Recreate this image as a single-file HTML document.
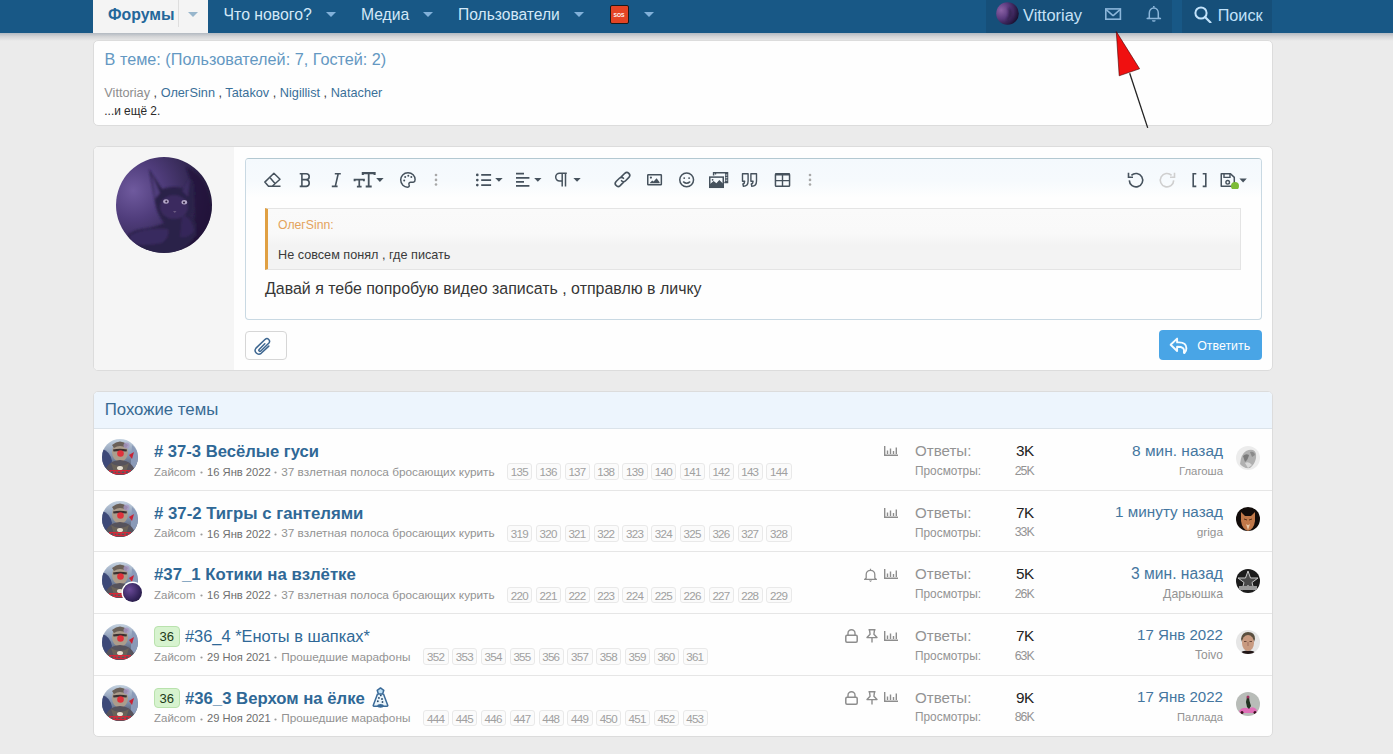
<!DOCTYPE html><html><head><meta charset="utf-8"><style>
html,body{margin:0;padding:0;width:1393px;height:754px;overflow:hidden;background:#ebebeb;font-family:"Liberation Sans",sans-serif;position:relative}
</style></head><body>
<div style="position:absolute;left:0px;top:0px;width:1393px;height:32.5px;background:#185886"></div><div style="position:absolute;left:0px;top:32.5px;width:1393px;height:8.5px;background:linear-gradient(#b2b9c1,#d4d5d7 45%,#ebebeb)"></div><div style="position:absolute;left:93px;top:0px;width:115px;height:32.5px;background:#f4f4f4"></div><div style="position:absolute;left:178px;top:0px;width:1px;height:27px;background:#dedede"></div><svg style="position:absolute;left:188.0px;top:11.8px;" width="10" height="5" viewBox="0 0 10 5"><path d="M0 0H10L5.0 5Z" fill="#98b6cc"/></svg><svg style="position:absolute;left:326.0px;top:12px;" width="10" height="5" viewBox="0 0 10 5"><path d="M0 0H10L5.0 5Z" fill="#82b1da"/></svg><svg style="position:absolute;left:423.2px;top:12px;" width="10" height="5" viewBox="0 0 10 5"><path d="M0 0H10L5.0 5Z" fill="#82b1da"/></svg><svg style="position:absolute;left:574.2px;top:12px;" width="10" height="5" viewBox="0 0 10 5"><path d="M0 0H10L5.0 5Z" fill="#82b1da"/></svg><div style="position:absolute;left:610px;top:5px;width:18.5px;height:18.5px;background:#e44424;border:1.5px solid #1a1a1a;box-sizing:border-box;border-radius:2px"></div><svg style="position:absolute;left:644.0px;top:12px;" width="10" height="5" viewBox="0 0 10 5"><path d="M0 0H10L5.0 5Z" fill="#82b1da"/></svg><div style="position:absolute;left:986px;top:0px;width:186px;height:32.5px;background:#164f79"></div><div style="position:absolute;left:1182px;top:0px;width:90px;height:32.5px;background:#164f79"></div><svg style="position:absolute;left:995.5px;top:2.2px;" width="23" height="23" viewBox="0 0 23 23"><defs><radialGradient id="vg" cx="22%" cy="35%" r="85%"><stop offset="0" stop-color="#8c62a6"/><stop offset="0.45" stop-color="#5a3a7e"/><stop offset="0.8" stop-color="#2c1c48"/><stop offset="1" stop-color="#120c26"/></radialGradient><filter id="vb"><feGaussianBlur stdDeviation="0.8"/></filter></defs><circle cx="11.5" cy="11.5" r="11.3" fill="url(#vg)"/><path d="M12 5 Q17 7 16 13 Q14 18 10 19 Q14 13 12 5Z" fill="#2a1a44" opacity="0.7" filter="url(#vb)"/></svg><svg style="position:absolute;left:1104px;top:7px;" width="18" height="14" viewBox="0 0 18 14"><rect x="1.8" y="1.9" width="14.6" height="10.3" fill="none" stroke="#8bb6da" stroke-width="1.6"/><path d="M2.2 2.6L8.4 8.1Q9.1 8.7 9.8 8.1L16 2.6" fill="none" stroke="#8bb6da" stroke-width="1.5"/></svg><svg style="position:absolute;left:1146px;top:5px;" width="16" height="18" viewBox="0 0 16 18"><path d="M7.8 0.9V2.6" stroke="#8bb6da" stroke-width="1.6"/><path d="M3.3 13.1V8.3C3.3 5.2 5.2 3 7.8 3C10.4 3 12.3 5.2 12.3 8.3V13.1L14.4 13.6H1.2Z" fill="none" stroke="#8bb6da" stroke-width="1.5" stroke-linejoin="round"/><path d="M5.9 15.2H9.7A1.9 1.5 0 0 1 5.9 15.2Z" fill="#8bb6da"/></svg><svg style="position:absolute;left:1193.5px;top:5.5px;" width="18" height="17" viewBox="0 0 18 17"><circle cx="7" cy="7" r="5.6" fill="none" stroke="#c2e2fa" stroke-width="2"/><path d="M11 11l5.5 5.5" stroke="#c2e2fa" stroke-width="2.2" stroke-linecap="round"/></svg><div style="position:absolute;left:93px;top:40px;width:1179.5px;height:85.5px;background:#fefefe;border:1px solid #dcdcdc;border-radius:5px;box-sizing:border-box"></div><div style="position:absolute;left:93px;top:146px;width:1179.5px;height:224.5px;background:#fefefe;border:1px solid #dcdcdc;border-radius:5px;box-sizing:border-box"></div><div style="position:absolute;left:94px;top:147px;width:139.5px;height:222.5px;background:#f5f5f5;border-radius:4px 0 0 4px"></div><svg style="position:absolute;left:116px;top:157px;" width="96" height="96" viewBox="0 0 96 96"><defs><radialGradient id="av" cx="18%" cy="35%" r="100%"><stop offset="0" stop-color="#6f5a9e"/><stop offset="0.3" stop-color="#503d7c"/><stop offset="0.65" stop-color="#31264f"/><stop offset="1" stop-color="#171028"/></radialGradient>
<clipPath id="avc"><circle cx="48" cy="48" r="48"/></clipPath><filter id="avb"><feGaussianBlur stdDeviation="1.3"/></filter><filter id="avb2"><feGaussianBlur stdDeviation="0.5"/></filter></defs>
<circle cx="48" cy="48" r="48" fill="url(#av)"/>
<g clip-path="url(#avc)"><g filter="url(#avb)">
<path d="M70 10 Q96 20 96 60 L96 96 L70 96 Q84 60 76 28Z" fill="#20163a" opacity="0.75"/>
<path d="M33 12 Q40 22 46 32 Q58 28 70 32 Q72 26 76 22 Q80 32 78 42 Q80 54 74 60 Q82 64 80 78 Q72 90 60 96 L30 96 Q10 92 8 84 Q12 74 26 72 Q40 70 48 66 Q42 58 40 50 Q36 30 33 12Z" fill="#2c2048"/>
<path d="M35 16 Q40 26 44 36 L39 42Z" fill="#5a4688" opacity="0.8"/><path d="M66 34 L74 22 L72 40Z" fill="#3e2f64"/>
<path d="M14 78 Q30 70 52 72 Q54 80 46 86 Q26 90 14 86Z" fill="#3a2a60" opacity="0.9"/>
<path d="M66 58 Q76 60 78 74 Q72 82 64 80Z" fill="#36285a"/>
<ellipse cx="58" cy="50" rx="14" ry="12" fill="#3a2c5e"/>
</g>
<g filter="url(#avb2)">
<ellipse cx="50" cy="44.5" rx="2.8" ry="2.2" fill="#b4a8c8"/><ellipse cx="68.3" cy="45.3" rx="2.8" ry="2.2" fill="#b4a8c8"/>
<circle cx="50.3" cy="44.6" r="1" fill="#2a1a3a"/><circle cx="68" cy="45.4" r="1" fill="#2a1a3a"/>
<path d="M57 54 L60.5 54 L58.8 56Z" fill="#6a5a80"/>
</g></g></svg><div style="position:absolute;left:244.5px;top:157.5px;width:1017.3px;height:162.0px;background:#fefefe;border:1px solid #c9d9e3;border-top-color:#b3c8d1;border-radius:4px;box-sizing:border-box"></div><div style="position:absolute;left:245.5px;top:158.5px;width:1015.3px;height:39.5px;background:linear-gradient(#f4f9fd,#f6fafd 55%,#fefefe);border-radius:3px 3px 0 0"></div><svg style="position:absolute;left:263px;top:171px;" width="20" height="18" viewBox="0 0 20 18"><path d="M1.8 11.1L10.9 2.3L17 8.3L9.2 15.3H5.5z M7.3 6.9L12.2 12.7 M5.4 15.3H17.5" fill="none" stroke="#46525d" stroke-width="1.5" stroke-linejoin="round"/></svg><svg style="position:absolute;left:298px;top:171px;" width="15" height="18" viewBox="0 0 15 18"><path d="M1.7 2.75H8.2A3 2.95 0 0 1 8.2 8.65H3.9M8.2 8.65A3.5 3.4 0 0 1 8.4 15.35H1.7M3.9 2.75V15.35" fill="none" stroke="#46525d" stroke-width="1.6"/></svg><svg style="position:absolute;left:330px;top:171px;" width="14" height="18" viewBox="0 0 14 18"><path d="M4.8 2.75H10.8M8.2 2.75L5.3 15.35M1.8 15.35H7.6" fill="none" stroke="#46525d" stroke-width="1.6"/></svg><svg style="position:absolute;left:353px;top:171px;" width="32" height="18" viewBox="0 0 32 18"><path d="M1.6 10.2V8.6H10.9V10.2" fill="none" stroke="#46525d" stroke-width="1.9"/><path d="M6.25 8.8V15.4M3.9 15.6H8.6" fill="none" stroke="#46525d" stroke-width="1.7"/><path d="M9.8 3.9V2.1H21.6V3.9" fill="none" stroke="#46525d" stroke-width="2.1"/><path d="M15.7 2.4V15.3M12.7 15.5H18.7" fill="none" stroke="#46525d" stroke-width="1.8"/><path d="M23.2 6.9H30.6L26.9 10.9Z" fill="#46525d"/></svg><svg style="position:absolute;left:399px;top:171px;" width="18" height="18" viewBox="0 0 18 18"><path d="M9 1.8C4.6 1.8 1.7 5.1 1.7 8.8C1.7 13.5 5.2 16.2 8.5 16.2C10.6 16.2 10.4 14.6 10 13.4C9.6 12.1 10.6 11 12 11.2C13.6 11.5 16.1 11.6 16.1 8.6C16.1 4.8 13.2 1.8 9 1.8Z" fill="none" stroke="#46525d" stroke-width="1.5"/><circle cx="5.2" cy="9.4" r="1" fill="#46525d"/><circle cx="6.2" cy="5.9" r="1" fill="#46525d"/><circle cx="9.3" cy="4.7" r="1" fill="#46525d"/><circle cx="12.3" cy="5.9" r="1" fill="#46525d"/></svg><svg style="position:absolute;left:433.6px;top:172px;" width="4" height="15" viewBox="0 0 4 15"><circle cx="2" cy="3" r="1.3" fill="#a8a8a8"/><circle cx="2" cy="7.9" r="1.3" fill="#a8a8a8"/><circle cx="2" cy="12.5" r="1.3" fill="#a8a8a8"/></svg><svg style="position:absolute;left:808.3px;top:172px;" width="4" height="15" viewBox="0 0 4 15"><circle cx="2" cy="3" r="1.3" fill="#a8a8a8"/><circle cx="2" cy="7.9" r="1.3" fill="#a8a8a8"/><circle cx="2" cy="12.5" r="1.3" fill="#a8a8a8"/></svg><svg style="position:absolute;left:474px;top:171px;" width="30" height="18" viewBox="0 0 30 18"><circle cx="3.3" cy="3.9" r="1.35" fill="#46525d"/><circle cx="3.3" cy="9.1" r="1.35" fill="#46525d"/><circle cx="3.3" cy="14.1" r="1.35" fill="#46525d"/><path d="M7.2 3.9H17.1M7.2 9.1H17.1M7.2 14.1H17.1" stroke="#46525d" stroke-width="1.7"/><path d="M21.2 6.9H28.7L24.95 10.8Z" fill="#46525d"/></svg><svg style="position:absolute;left:514px;top:171px;" width="30" height="18" viewBox="0 0 30 18"><path d="M2 2.6H10M2 6.9H15.4M2 10.8H10M2 14.8H15.4" stroke="#46525d" stroke-width="1.7"/><path d="M20.2 6.9H27.5L23.85 10.8Z" fill="#46525d"/></svg><svg style="position:absolute;left:554px;top:171px;" width="28" height="18" viewBox="0 0 28 18"><path d="M12.8 2.2H5.6A3.9 3.9 0 0 0 5.6 10H7.6M8.2 2.2V15.5M11.5 2.2V15.5" fill="none" stroke="#46525d" stroke-width="1.5"/><path d="M19.4 6.9H26.7L23.05 10.8Z" fill="#46525d"/></svg><svg style="position:absolute;left:613px;top:170px;" width="19" height="19" viewBox="0 0 19 19"><path d="M8.2 6.9L11.8 3.3a2.9 2.9 0 0 1 4.1 4.1L12.6 10.7a2.9 2.9 0 0 1-4.1 0M10.6 12.1L7.2 15.6a2.9 2.9 0 0 1-4.1-4.1L6.4 8.3a2.9 2.9 0 0 1 4.1 0" fill="none" stroke="#46525d" stroke-width="1.6" stroke-linecap="round"/></svg><svg style="position:absolute;left:646px;top:173px;" width="17" height="14" viewBox="0 0 17 14"><rect x="1.75" y="1.75" width="13.6" height="10.1" rx="0.6" fill="none" stroke="#46525d" stroke-width="1.5"/><circle cx="4.9" cy="4.6" r="1.1" fill="#46525d"/><path d="M3.5 10.2L6.2 7.4L7.6 8.6L10.6 5.3L13.6 9.3V10.2Z" fill="#46525d"/></svg><svg style="position:absolute;left:678px;top:171px;" width="18" height="18" viewBox="0 0 18 18"><circle cx="8.65" cy="8.85" r="6.9" fill="none" stroke="#46525d" stroke-width="1.5"/><circle cx="6.2" cy="7.1" r="0.95" fill="#46525d"/><circle cx="11.1" cy="7.1" r="0.95" fill="#46525d"/><path d="M5.5 10.9Q8.65 13.6 11.8 10.9" fill="none" stroke="#46525d" stroke-width="1.4" stroke-linecap="round"/></svg><svg style="position:absolute;left:708px;top:171px;" width="22" height="18" viewBox="0 0 22 18"><path d="M5.6 4.5V1.8H19.5V11.5H16.3" fill="none" stroke="#46525d" stroke-width="1.5"/><path d="M17.6 4H19.5M17.6 6.6H19.5M17.6 9.1H19.5" stroke="#fff" stroke-width="0.9"/><rect x="17" y="2" width="2.4" height="9.4" fill="#46525d"/><rect x="17.7" y="3.4" width="1" height="1.3" fill="#f5f9fc"/><rect x="17.7" y="6" width="1" height="1.3" fill="#f5f9fc"/><rect x="17.7" y="8.6" width="1" height="1.3" fill="#f5f9fc"/><path d="M7.6 1.8V3.6" stroke="#46525d" stroke-width="1.2"/><rect x="1.75" y="6.1" width="13.5" height="10.2" fill="none" stroke="#46525d" stroke-width="1.5"/><path d="M1.8 16.3V13.2L5.6 10L8.4 12.2L11.3 9.1L15.2 12.8V16.3Z" fill="#46525d"/><circle cx="4.6" cy="8.8" r="0.9" fill="#46525d"/></svg><svg style="position:absolute;left:740px;top:171px;" width="21" height="18" viewBox="0 0 21 18"><path d="M2.5 2.8H8.1V10.1C8.1 13 6.7 15.3 3.4 15.4L2.9 13C4.2 12.7 4.7 11.8 4.7 10.3H2.5Z M10.9 2.8H16.5V10.1C16.5 13 15.1 15.3 11.8 15.4L11.3 13C12.6 12.7 13.1 11.8 13.1 10.3H10.9Z" fill="none" stroke="#46525d" stroke-width="1.4" stroke-linejoin="round"/></svg><svg style="position:absolute;left:773px;top:171px;" width="19" height="18" viewBox="0 0 19 18"><rect x="2.45" y="2.85" width="14.1" height="12.4" rx="0.8" fill="none" stroke="#46525d" stroke-width="1.5"/><path d="M2.4 3.3H16.6" stroke="#46525d" stroke-width="2.4"/><path d="M9.5 3V15.2M2.5 9.6H16.5" stroke="#46525d" stroke-width="1.4"/></svg><svg style="position:absolute;left:1126px;top:170px;" width="19" height="20" viewBox="0 0 19 20"><path d="M3.3 10.4A6.7 6.7 0 1 0 5.4 5.3" fill="none" stroke="#46525d" stroke-width="1.6"/><path d="M2.5 2.8V7.3H7" fill="none" stroke="#46525d" stroke-width="1.6"/></svg><svg style="position:absolute;left:1158px;top:170px;" width="19" height="20" viewBox="0 0 19 20"><path d="M15.7 10.4A6.7 6.7 0 1 1 13.6 5.3" fill="none" stroke="#cfcfcf" stroke-width="1.6"/><path d="M16.5 2.8V7.3H12" fill="none" stroke="#cfcfcf" stroke-width="1.6"/></svg><svg style="position:absolute;left:1191px;top:171px;" width="17" height="18" viewBox="0 0 17 18"><path d="M5.3 2.8H2.2V15.4H5.3M11.7 2.8H14.8V15.4H11.7" fill="none" stroke="#46525d" stroke-width="1.6"/></svg><svg style="position:absolute;left:1219px;top:171px;" width="30" height="18" viewBox="0 0 30 18"><path d="M2.25 2.75H11.5L15.3 6.4V15.35H2.25Z" fill="none" stroke="#46525d" stroke-width="1.5" stroke-linejoin="round"/><path d="M5 2.8V6.4H11V2.8" fill="none" stroke="#46525d" stroke-width="1.4"/><circle cx="8.7" cy="11.3" r="1.8" fill="none" stroke="#46525d" stroke-width="1.4"/><circle cx="16" cy="15" r="4" fill="#7cbb37"/><path d="M20.4 7.6H27.8L24.1 11.4Z" fill="#46525d"/></svg><div style="position:absolute;left:265px;top:208.3px;width:975.5999999999999px;height:61.30000000000001px;background:linear-gradient(#fafafa,#f9f9f9 40%,#f3f3f3 60%,#f3f3f3);border:1px solid #e4e4e4;border-left:3px solid #e0a043;box-sizing:border-box"></div><div style="position:absolute;left:244.5px;top:330.5px;width:42.0px;height:29.0px;background:#fefefe;border:1px solid #d6d6d6;border-radius:4px;box-sizing:border-box"></div><svg style="position:absolute;left:250px;top:334px;" width="26" height="24" viewBox="0 0 26 24"><path d="M18.8 12.1L11.2 19.3A3.7 3.7 0 0 1 6 14.1L15.2 5.3A2.65 2.65 0 0 1 18.95 9L10.8 17A1.15 1.15 0 0 1 9.15 15.4L14.8 9.8" fill="none" stroke="#3d6690" stroke-width="1.5" stroke-linecap="round"/></svg><div style="position:absolute;left:1159px;top:330.3px;width:103.20000000000005px;height:29.5px;background:#49a5e6;border-radius:4px"></div><svg style="position:absolute;left:1168px;top:336px;" width="21" height="20" viewBox="0 0 21 20"><path d="M2.6 8.8L9.1 2.6V6.4H11C15.5 6.4 18.4 8.6 18.4 12.3C18.4 14.4 17.7 15.9 16.5 16.9C16.2 17.1 15.8 16.9 15.9 16.5C16.3 14.8 16 13 14.8 11.9C13.7 11 12 10.8 9.1 10.8V15Z" fill="none" stroke="#f4fbff" stroke-width="1.9" stroke-linejoin="round"/></svg><div style="position:absolute;left:93px;top:391px;width:1179.5px;height:346px;background:#fefefe;border:1px solid #dcdcdc;border-radius:5px;box-sizing:border-box"></div><div style="position:absolute;left:94px;top:392px;width:1177.5px;height:36.19999999999999px;background:#edf5fd;border-bottom:1px solid #dbe3ea;border-radius:4px 4px 0 0"></div><svg style="position:absolute;left:102px;top:439.0px;" width="36" height="36" viewBox="0 0 36 36"><defs><linearGradient id="zg0" x1="0" y1="0" x2="0" y2="1"><stop offset="0" stop-color="#c4d2e0"/><stop offset="0.45" stop-color="#8494b0"/><stop offset="1" stop-color="#343644"/></linearGradient>
<clipPath id="zc0"><circle cx="18" cy="18" r="18"/></clipPath><filter id="zb0"><feGaussianBlur stdDeviation="0.7"/></filter></defs>
<g clip-path="url(#zc0)"><rect width="36" height="36" fill="url(#zg0)"/>
<g filter="url(#zb0)">
<path d="M0 10 Q8 12 10 22 L6 36 H0Z" fill="#3d4a78"/>
<path d="M30 6 Q36 10 36 20 V36 H28 Z" fill="#8a9ab8"/>
<ellipse cx="18" cy="13" rx="8" ry="10" fill="#ab9d8c"/>
<path d="M10 6 Q18 -1 26 6 L24 9 Q18 5 12 9Z" fill="#6b6058"/>
<circle cx="24.5" cy="6.5" r="3" fill="#a898c4" opacity="0.8"/>
<path d="M2 36 Q4 22 18 21 Q32 22 34 36Z" fill="#56525c"/>
<path d="M9 24 Q18 30 27 24 L24 33 H12Z" fill="#6a6258"/>
<ellipse cx="18" cy="29" rx="3" ry="2" fill="#e8e0d0"/>
<path d="M11 10.5 Q18 9 25 10.5 L24.5 12.5 Q18 11.5 11.5 12.5Z" fill="#3a3030"/><circle cx="18.5" cy="14.5" r="3.3" fill="#e0303a"/>
<path d="M27 16 L32 13 L30 20Z" fill="#c82434"/>
<path d="M7 31h22v1.2h-22zM7 34h22v1.2h-22z" fill="#d42838"/><path d="M8 31v4M12 31v4M15 31v4M19 31v4M23 31v4M27 31v4" stroke="#d42838" stroke-width="1.4"/>
</g></g></svg><svg style="position:absolute;left:199.6px;top:471.1px;" width="3" height="3" viewBox="0 0 3 3"><circle cx="1.5" cy="1.5" r="1.1" fill="#9a9a9a"/></svg><svg style="position:absolute;left:274.4px;top:471.1px;" width="3" height="3" viewBox="0 0 3 3"><circle cx="1.5" cy="1.5" r="1.1" fill="#9a9a9a"/></svg><div style="position:absolute;left:507.2px;top:463.3px;width:25.19999999999999px;height:16.69999999999999px;background:#fbfbfb;border:1px solid #e9e9e9;border-radius:3px;box-sizing:border-box"></div><div style="position:absolute;left:536.0px;top:463.3px;width:25.200000000000045px;height:16.69999999999999px;background:#fbfbfb;border:1px solid #e9e9e9;border-radius:3px;box-sizing:border-box"></div><div style="position:absolute;left:564.8px;top:463.3px;width:25.200000000000045px;height:16.69999999999999px;background:#fbfbfb;border:1px solid #e9e9e9;border-radius:3px;box-sizing:border-box"></div><div style="position:absolute;left:593.6px;top:463.3px;width:25.200000000000045px;height:16.69999999999999px;background:#fbfbfb;border:1px solid #e9e9e9;border-radius:3px;box-sizing:border-box"></div><div style="position:absolute;left:622.4px;top:463.3px;width:25.200000000000045px;height:16.69999999999999px;background:#fbfbfb;border:1px solid #e9e9e9;border-radius:3px;box-sizing:border-box"></div><div style="position:absolute;left:651.2px;top:463.3px;width:25.200000000000045px;height:16.69999999999999px;background:#fbfbfb;border:1px solid #e9e9e9;border-radius:3px;box-sizing:border-box"></div><div style="position:absolute;left:680.0px;top:463.3px;width:25.200000000000045px;height:16.69999999999999px;background:#fbfbfb;border:1px solid #e9e9e9;border-radius:3px;box-sizing:border-box"></div><div style="position:absolute;left:708.8px;top:463.3px;width:25.200000000000045px;height:16.69999999999999px;background:#fbfbfb;border:1px solid #e9e9e9;border-radius:3px;box-sizing:border-box"></div><div style="position:absolute;left:737.6px;top:463.3px;width:25.200000000000045px;height:16.69999999999999px;background:#fbfbfb;border:1px solid #e9e9e9;border-radius:3px;box-sizing:border-box"></div><div style="position:absolute;left:766.4px;top:463.3px;width:25.200000000000045px;height:16.69999999999999px;background:#fbfbfb;border:1px solid #e9e9e9;border-radius:3px;box-sizing:border-box"></div><svg style="position:absolute;left:884px;top:446.0px;" width="14" height="10" viewBox="0 0 14 10"><path d="M0.7 0v9.3H14M3.5 4.5v3.5M6.5 2.5v5.5M9.5 5v3M12.3 1.5v6.5" fill="none" stroke="#8d8d8d" stroke-width="1.4"/></svg><svg style="position:absolute;left:1236px;top:445.5px;" width="24" height="24" viewBox="0 0 24 24"><defs><clipPath id="lc0"><circle cx="12" cy="12" r="12"/></clipPath><filter id="lb0"><feGaussianBlur stdDeviation="0.6"/></filter></defs>
<g clip-path="url(#lc0)"><rect width="24" height="24" fill="#ececec"/><g filter="url(#lb0)">
<path d="M4 18 Q5 8 10 5 Q14 3 17 4 Q21 6 20 12 Q19 18 14 22 Q8 23 4 18Z" fill="#b0b0b0"/>
<path d="M7 10 Q10 7 13 9 Q12 14 9 16Z" fill="#7a7a7a"/><path d="M14 6 Q18 5 19 9 L16 11Z" fill="#8a8a8a"/>
<path d="M9 17 Q13 15 16 19 L12 22Z" fill="#d8d8d8"/></g></g></svg><div style="position:absolute;left:94px;top:490px;width:1178px;height:1px;background:#e6e6e6"></div><svg style="position:absolute;left:102px;top:500.6px;" width="36" height="36" viewBox="0 0 36 36"><defs><linearGradient id="zg1" x1="0" y1="0" x2="0" y2="1"><stop offset="0" stop-color="#c4d2e0"/><stop offset="0.45" stop-color="#8494b0"/><stop offset="1" stop-color="#343644"/></linearGradient>
<clipPath id="zc1"><circle cx="18" cy="18" r="18"/></clipPath><filter id="zb1"><feGaussianBlur stdDeviation="0.7"/></filter></defs>
<g clip-path="url(#zc1)"><rect width="36" height="36" fill="url(#zg1)"/>
<g filter="url(#zb1)">
<path d="M0 10 Q8 12 10 22 L6 36 H0Z" fill="#3d4a78"/>
<path d="M30 6 Q36 10 36 20 V36 H28 Z" fill="#8a9ab8"/>
<ellipse cx="18" cy="13" rx="8" ry="10" fill="#ab9d8c"/>
<path d="M10 6 Q18 -1 26 6 L24 9 Q18 5 12 9Z" fill="#6b6058"/>
<circle cx="24.5" cy="6.5" r="3" fill="#a898c4" opacity="0.8"/>
<path d="M2 36 Q4 22 18 21 Q32 22 34 36Z" fill="#56525c"/>
<path d="M9 24 Q18 30 27 24 L24 33 H12Z" fill="#6a6258"/>
<ellipse cx="18" cy="29" rx="3" ry="2" fill="#e8e0d0"/>
<path d="M11 10.5 Q18 9 25 10.5 L24.5 12.5 Q18 11.5 11.5 12.5Z" fill="#3a3030"/><circle cx="18.5" cy="14.5" r="3.3" fill="#e0303a"/>
<path d="M27 16 L32 13 L30 20Z" fill="#c82434"/>
<path d="M7 31h22v1.2h-22zM7 34h22v1.2h-22z" fill="#d42838"/><path d="M8 31v4M12 31v4M15 31v4M19 31v4M23 31v4M27 31v4" stroke="#d42838" stroke-width="1.4"/>
</g></g></svg><svg style="position:absolute;left:199.6px;top:532.6999999999999px;" width="3" height="3" viewBox="0 0 3 3"><circle cx="1.5" cy="1.5" r="1.1" fill="#9a9a9a"/></svg><svg style="position:absolute;left:274.4px;top:532.6999999999999px;" width="3" height="3" viewBox="0 0 3 3"><circle cx="1.5" cy="1.5" r="1.1" fill="#9a9a9a"/></svg><div style="position:absolute;left:507.2px;top:524.9px;width:25.19999999999999px;height:16.700000000000045px;background:#fbfbfb;border:1px solid #e9e9e9;border-radius:3px;box-sizing:border-box"></div><div style="position:absolute;left:536.0px;top:524.9px;width:25.200000000000045px;height:16.700000000000045px;background:#fbfbfb;border:1px solid #e9e9e9;border-radius:3px;box-sizing:border-box"></div><div style="position:absolute;left:564.8px;top:524.9px;width:25.200000000000045px;height:16.700000000000045px;background:#fbfbfb;border:1px solid #e9e9e9;border-radius:3px;box-sizing:border-box"></div><div style="position:absolute;left:593.6px;top:524.9px;width:25.200000000000045px;height:16.700000000000045px;background:#fbfbfb;border:1px solid #e9e9e9;border-radius:3px;box-sizing:border-box"></div><div style="position:absolute;left:622.4px;top:524.9px;width:25.200000000000045px;height:16.700000000000045px;background:#fbfbfb;border:1px solid #e9e9e9;border-radius:3px;box-sizing:border-box"></div><div style="position:absolute;left:651.2px;top:524.9px;width:25.200000000000045px;height:16.700000000000045px;background:#fbfbfb;border:1px solid #e9e9e9;border-radius:3px;box-sizing:border-box"></div><div style="position:absolute;left:680.0px;top:524.9px;width:25.200000000000045px;height:16.700000000000045px;background:#fbfbfb;border:1px solid #e9e9e9;border-radius:3px;box-sizing:border-box"></div><div style="position:absolute;left:708.8px;top:524.9px;width:25.200000000000045px;height:16.700000000000045px;background:#fbfbfb;border:1px solid #e9e9e9;border-radius:3px;box-sizing:border-box"></div><div style="position:absolute;left:737.6px;top:524.9px;width:25.200000000000045px;height:16.700000000000045px;background:#fbfbfb;border:1px solid #e9e9e9;border-radius:3px;box-sizing:border-box"></div><div style="position:absolute;left:766.4px;top:524.9px;width:25.200000000000045px;height:16.700000000000045px;background:#fbfbfb;border:1px solid #e9e9e9;border-radius:3px;box-sizing:border-box"></div><svg style="position:absolute;left:884px;top:507.6px;" width="14" height="10" viewBox="0 0 14 10"><path d="M0.7 0v9.3H14M3.5 4.5v3.5M6.5 2.5v5.5M9.5 5v3M12.3 1.5v6.5" fill="none" stroke="#8d8d8d" stroke-width="1.4"/></svg><svg style="position:absolute;left:1236px;top:507.1px;" width="24" height="24" viewBox="0 0 24 24"><defs><clipPath id="lc1"><circle cx="12" cy="12" r="12"/></clipPath><filter id="lb1"><feGaussianBlur stdDeviation="0.6"/></filter></defs>
<g clip-path="url(#lc1)"><rect width="24" height="24" fill="#120c0a"/><g filter="url(#lb1)">
<path d="M5 5 L9 9 H15 L19 5 L19 14 Q18 22 12 24 Q6 22 5 14Z" fill="#c07848"/>
<path d="M8 12 L11 13 M13 13 L16 12" stroke="#5a3018" stroke-width="1"/><path d="M10 17 Q12 19 14 17 L12 23Z" fill="#e8c8a8"/></g></g></svg><div style="position:absolute;left:94px;top:551px;width:1178px;height:1px;background:#e6e6e6"></div><svg style="position:absolute;left:102px;top:562.2px;" width="36" height="36" viewBox="0 0 36 36"><defs><linearGradient id="zg2" x1="0" y1="0" x2="0" y2="1"><stop offset="0" stop-color="#c4d2e0"/><stop offset="0.45" stop-color="#8494b0"/><stop offset="1" stop-color="#343644"/></linearGradient>
<clipPath id="zc2"><circle cx="18" cy="18" r="18"/></clipPath><filter id="zb2"><feGaussianBlur stdDeviation="0.7"/></filter></defs>
<g clip-path="url(#zc2)"><rect width="36" height="36" fill="url(#zg2)"/>
<g filter="url(#zb2)">
<path d="M0 10 Q8 12 10 22 L6 36 H0Z" fill="#3d4a78"/>
<path d="M30 6 Q36 10 36 20 V36 H28 Z" fill="#8a9ab8"/>
<ellipse cx="18" cy="13" rx="8" ry="10" fill="#ab9d8c"/>
<path d="M10 6 Q18 -1 26 6 L24 9 Q18 5 12 9Z" fill="#6b6058"/>
<circle cx="24.5" cy="6.5" r="3" fill="#a898c4" opacity="0.8"/>
<path d="M2 36 Q4 22 18 21 Q32 22 34 36Z" fill="#56525c"/>
<path d="M9 24 Q18 30 27 24 L24 33 H12Z" fill="#6a6258"/>
<ellipse cx="18" cy="29" rx="3" ry="2" fill="#e8e0d0"/>
<path d="M11 10.5 Q18 9 25 10.5 L24.5 12.5 Q18 11.5 11.5 12.5Z" fill="#3a3030"/><circle cx="18.5" cy="14.5" r="3.3" fill="#e0303a"/>
<path d="M27 16 L32 13 L30 20Z" fill="#c82434"/>
<path d="M7 31h22v1.2h-22zM7 34h22v1.2h-22z" fill="#d42838"/><path d="M8 31v4M12 31v4M15 31v4M19 31v4M23 31v4M27 31v4" stroke="#d42838" stroke-width="1.4"/>
</g></g></svg><div style="position:absolute;left:123px;top:583px;width:19px;height:19px;border-radius:50%;background:radial-gradient(circle at 35% 35%,#6a4a98,#33245a 60%,#1a1230);box-shadow:0 0 0 1.5px #fff"></div><svg style="position:absolute;left:199.6px;top:594.3px;" width="3" height="3" viewBox="0 0 3 3"><circle cx="1.5" cy="1.5" r="1.1" fill="#9a9a9a"/></svg><svg style="position:absolute;left:274.4px;top:594.3px;" width="3" height="3" viewBox="0 0 3 3"><circle cx="1.5" cy="1.5" r="1.1" fill="#9a9a9a"/></svg><div style="position:absolute;left:507.2px;top:586.5px;width:25.19999999999999px;height:16.700000000000045px;background:#fbfbfb;border:1px solid #e9e9e9;border-radius:3px;box-sizing:border-box"></div><div style="position:absolute;left:536.0px;top:586.5px;width:25.200000000000045px;height:16.700000000000045px;background:#fbfbfb;border:1px solid #e9e9e9;border-radius:3px;box-sizing:border-box"></div><div style="position:absolute;left:564.8px;top:586.5px;width:25.200000000000045px;height:16.700000000000045px;background:#fbfbfb;border:1px solid #e9e9e9;border-radius:3px;box-sizing:border-box"></div><div style="position:absolute;left:593.6px;top:586.5px;width:25.200000000000045px;height:16.700000000000045px;background:#fbfbfb;border:1px solid #e9e9e9;border-radius:3px;box-sizing:border-box"></div><div style="position:absolute;left:622.4px;top:586.5px;width:25.200000000000045px;height:16.700000000000045px;background:#fbfbfb;border:1px solid #e9e9e9;border-radius:3px;box-sizing:border-box"></div><div style="position:absolute;left:651.2px;top:586.5px;width:25.200000000000045px;height:16.700000000000045px;background:#fbfbfb;border:1px solid #e9e9e9;border-radius:3px;box-sizing:border-box"></div><div style="position:absolute;left:680.0px;top:586.5px;width:25.200000000000045px;height:16.700000000000045px;background:#fbfbfb;border:1px solid #e9e9e9;border-radius:3px;box-sizing:border-box"></div><div style="position:absolute;left:708.8px;top:586.5px;width:25.200000000000045px;height:16.700000000000045px;background:#fbfbfb;border:1px solid #e9e9e9;border-radius:3px;box-sizing:border-box"></div><div style="position:absolute;left:737.6px;top:586.5px;width:25.200000000000045px;height:16.700000000000045px;background:#fbfbfb;border:1px solid #e9e9e9;border-radius:3px;box-sizing:border-box"></div><div style="position:absolute;left:766.4px;top:586.5px;width:25.200000000000045px;height:16.700000000000045px;background:#fbfbfb;border:1px solid #e9e9e9;border-radius:3px;box-sizing:border-box"></div><svg style="position:absolute;left:863.5px;top:568.2px;" width="13" height="14" viewBox="0 0 13 14"><path d="M6.5 0.8v1.2M2.2 10V6.6a4.3 4.3 0 0 1 8.6 0V10l1.6 1.4H0.6z" fill="none" stroke="#8d8d8d" stroke-width="1.3" stroke-linejoin="round"/><path d="M4.8 12.6h3.4L6.5 14z" fill="#8d8d8d"/></svg><svg style="position:absolute;left:884px;top:569.2px;" width="14" height="10" viewBox="0 0 14 10"><path d="M0.7 0v9.3H14M3.5 4.5v3.5M6.5 2.5v5.5M9.5 5v3M12.3 1.5v6.5" fill="none" stroke="#8d8d8d" stroke-width="1.4"/></svg><svg style="position:absolute;left:1236px;top:568.7px;" width="24" height="24" viewBox="0 0 24 24"><defs><clipPath id="lc2"><circle cx="12" cy="12" r="12"/></clipPath><filter id="lb2"><feGaussianBlur stdDeviation="0.5"/></filter></defs>
<g clip-path="url(#lc2)"><rect width="24" height="24" fill="#1c1c1c"/><g filter="url(#lb2)">
<path d="M12 2 L14.5 9 H22 L16 13.5 L18 21 L12 16.5 L6 21 L8 13.5 L2 9 H9.5Z" fill="#4a4a4a" stroke="#c8c8c8" stroke-width="1"/>
<rect x="3" y="17" width="18" height="4" fill="#9a9a9a"/></g></g></svg><div style="position:absolute;left:94px;top:613px;width:1178px;height:1px;background:#e6e6e6"></div><svg style="position:absolute;left:102px;top:623.8px;" width="36" height="36" viewBox="0 0 36 36"><defs><linearGradient id="zg3" x1="0" y1="0" x2="0" y2="1"><stop offset="0" stop-color="#c4d2e0"/><stop offset="0.45" stop-color="#8494b0"/><stop offset="1" stop-color="#343644"/></linearGradient>
<clipPath id="zc3"><circle cx="18" cy="18" r="18"/></clipPath><filter id="zb3"><feGaussianBlur stdDeviation="0.7"/></filter></defs>
<g clip-path="url(#zc3)"><rect width="36" height="36" fill="url(#zg3)"/>
<g filter="url(#zb3)">
<path d="M0 10 Q8 12 10 22 L6 36 H0Z" fill="#3d4a78"/>
<path d="M30 6 Q36 10 36 20 V36 H28 Z" fill="#8a9ab8"/>
<ellipse cx="18" cy="13" rx="8" ry="10" fill="#ab9d8c"/>
<path d="M10 6 Q18 -1 26 6 L24 9 Q18 5 12 9Z" fill="#6b6058"/>
<circle cx="24.5" cy="6.5" r="3" fill="#a898c4" opacity="0.8"/>
<path d="M2 36 Q4 22 18 21 Q32 22 34 36Z" fill="#56525c"/>
<path d="M9 24 Q18 30 27 24 L24 33 H12Z" fill="#6a6258"/>
<ellipse cx="18" cy="29" rx="3" ry="2" fill="#e8e0d0"/>
<path d="M11 10.5 Q18 9 25 10.5 L24.5 12.5 Q18 11.5 11.5 12.5Z" fill="#3a3030"/><circle cx="18.5" cy="14.5" r="3.3" fill="#e0303a"/>
<path d="M27 16 L32 13 L30 20Z" fill="#c82434"/>
<path d="M7 31h22v1.2h-22zM7 34h22v1.2h-22z" fill="#d42838"/><path d="M8 31v4M12 31v4M15 31v4M19 31v4M23 31v4M27 31v4" stroke="#d42838" stroke-width="1.4"/>
</g></g></svg><div style="position:absolute;left:154px;top:626.2px;width:25.5px;height:20.700000000000045px;background:#d7f3cf;border:1px solid #b9e2ad;border-radius:4px;box-sizing:border-box"></div><svg style="position:absolute;left:199.6px;top:655.9px;" width="3" height="3" viewBox="0 0 3 3"><circle cx="1.5" cy="1.5" r="1.1" fill="#9a9a9a"/></svg><svg style="position:absolute;left:274.4px;top:655.9px;" width="3" height="3" viewBox="0 0 3 3"><circle cx="1.5" cy="1.5" r="1.1" fill="#9a9a9a"/></svg><div style="position:absolute;left:423.4px;top:648.1px;width:25.19999999999999px;height:16.699999999999932px;background:#fbfbfb;border:1px solid #e9e9e9;border-radius:3px;box-sizing:border-box"></div><div style="position:absolute;left:452.2px;top:648.1px;width:25.19999999999999px;height:16.699999999999932px;background:#fbfbfb;border:1px solid #e9e9e9;border-radius:3px;box-sizing:border-box"></div><div style="position:absolute;left:481.0px;top:648.1px;width:25.19999999999999px;height:16.699999999999932px;background:#fbfbfb;border:1px solid #e9e9e9;border-radius:3px;box-sizing:border-box"></div><div style="position:absolute;left:509.79999999999995px;top:648.1px;width:25.200000000000045px;height:16.699999999999932px;background:#fbfbfb;border:1px solid #e9e9e9;border-radius:3px;box-sizing:border-box"></div><div style="position:absolute;left:538.6px;top:648.1px;width:25.200000000000045px;height:16.699999999999932px;background:#fbfbfb;border:1px solid #e9e9e9;border-radius:3px;box-sizing:border-box"></div><div style="position:absolute;left:567.4px;top:648.1px;width:25.200000000000045px;height:16.699999999999932px;background:#fbfbfb;border:1px solid #e9e9e9;border-radius:3px;box-sizing:border-box"></div><div style="position:absolute;left:596.2px;top:648.1px;width:25.200000000000045px;height:16.699999999999932px;background:#fbfbfb;border:1px solid #e9e9e9;border-radius:3px;box-sizing:border-box"></div><div style="position:absolute;left:625.0px;top:648.1px;width:25.200000000000045px;height:16.699999999999932px;background:#fbfbfb;border:1px solid #e9e9e9;border-radius:3px;box-sizing:border-box"></div><div style="position:absolute;left:653.8px;top:648.1px;width:25.200000000000045px;height:16.699999999999932px;background:#fbfbfb;border:1px solid #e9e9e9;border-radius:3px;box-sizing:border-box"></div><div style="position:absolute;left:682.5999999999999px;top:648.1px;width:25.200000000000045px;height:16.699999999999932px;background:#fbfbfb;border:1px solid #e9e9e9;border-radius:3px;box-sizing:border-box"></div><svg style="position:absolute;left:845px;top:629.3px;" width="13" height="14" viewBox="0 0 13 14"><path d="M3 6V4.3a3.5 3.5 0 0 1 7 0V6" fill="none" stroke="#8d8d8d" stroke-width="1.4"/><rect x="0.8" y="6.2" width="11.4" height="7" rx="1.2" fill="none" stroke="#8d8d8d" stroke-width="1.5"/></svg><svg style="position:absolute;left:865.5px;top:629.3px;" width="12" height="14" viewBox="0 0 12 14"><path d="M2.5 0.8h7M3.5 0.8l0.6 4.5L1 8.6h10L7.9 5.3L8.5 0.8M6 8.6v5" fill="none" stroke="#8d8d8d" stroke-width="1.4" stroke-linejoin="round"/></svg><svg style="position:absolute;left:884px;top:630.8px;" width="14" height="10" viewBox="0 0 14 10"><path d="M0.7 0v9.3H14M3.5 4.5v3.5M6.5 2.5v5.5M9.5 5v3M12.3 1.5v6.5" fill="none" stroke="#8d8d8d" stroke-width="1.4"/></svg><svg style="position:absolute;left:1236px;top:630.3px;" width="24" height="24" viewBox="0 0 24 24"><defs><clipPath id="lc3"><circle cx="12" cy="12" r="12"/></clipPath><filter id="lb3"><feGaussianBlur stdDeviation="0.6"/></filter></defs>
<g clip-path="url(#lc3)"><rect width="24" height="24" fill="#e6e6e6"/><g filter="url(#lb3)">
<path d="M5 9 Q6 2 12 2 Q19 2 19 9 L18 12 Q16 6 12 7 Q8 6 6 12Z" fill="#5a5040"/>
<ellipse cx="12" cy="13" rx="6" ry="8" fill="#c89a80"/>
<path d="M8 11.5 H10.5 M13.5 11.5 H16" stroke="#6a4a3a" stroke-width="1"/><path d="M12 12 V16" stroke="#a07060" stroke-width="1"/>
<path d="M4 24 Q6 20 12 21 Q18 20 20 24Z" fill="#201818"/></g></g></svg><div style="position:absolute;left:94px;top:675px;width:1178px;height:1px;background:#e6e6e6"></div><svg style="position:absolute;left:102px;top:685.4px;" width="36" height="36" viewBox="0 0 36 36"><defs><linearGradient id="zg4" x1="0" y1="0" x2="0" y2="1"><stop offset="0" stop-color="#c4d2e0"/><stop offset="0.45" stop-color="#8494b0"/><stop offset="1" stop-color="#343644"/></linearGradient>
<clipPath id="zc4"><circle cx="18" cy="18" r="18"/></clipPath><filter id="zb4"><feGaussianBlur stdDeviation="0.7"/></filter></defs>
<g clip-path="url(#zc4)"><rect width="36" height="36" fill="url(#zg4)"/>
<g filter="url(#zb4)">
<path d="M0 10 Q8 12 10 22 L6 36 H0Z" fill="#3d4a78"/>
<path d="M30 6 Q36 10 36 20 V36 H28 Z" fill="#8a9ab8"/>
<ellipse cx="18" cy="13" rx="8" ry="10" fill="#ab9d8c"/>
<path d="M10 6 Q18 -1 26 6 L24 9 Q18 5 12 9Z" fill="#6b6058"/>
<circle cx="24.5" cy="6.5" r="3" fill="#a898c4" opacity="0.8"/>
<path d="M2 36 Q4 22 18 21 Q32 22 34 36Z" fill="#56525c"/>
<path d="M9 24 Q18 30 27 24 L24 33 H12Z" fill="#6a6258"/>
<ellipse cx="18" cy="29" rx="3" ry="2" fill="#e8e0d0"/>
<path d="M11 10.5 Q18 9 25 10.5 L24.5 12.5 Q18 11.5 11.5 12.5Z" fill="#3a3030"/><circle cx="18.5" cy="14.5" r="3.3" fill="#e0303a"/>
<path d="M27 16 L32 13 L30 20Z" fill="#c82434"/>
<path d="M7 31h22v1.2h-22zM7 34h22v1.2h-22z" fill="#d42838"/><path d="M8 31v4M12 31v4M15 31v4M19 31v4M23 31v4M27 31v4" stroke="#d42838" stroke-width="1.4"/>
</g></g></svg><div style="position:absolute;left:154px;top:687.8px;width:25.5px;height:20.700000000000045px;background:#d7f3cf;border:1px solid #b9e2ad;border-radius:4px;box-sizing:border-box"></div><svg style="position:absolute;left:366px;top:684px;" width="28" height="28" viewBox="0 0 28 28"><path d="M11.6 9.8L7.2 21.6Q7.4 22.4 8.5 22.2H20.5Q21.6 22.4 21.8 21.6L17.4 9.8" fill="#e9f4fb" stroke="#3a6a98" stroke-width="1.5" stroke-linejoin="round"/><path d="M14.5 3.9L17.8 6.3L16.6 10.1H12.4L11.2 6.3Z" fill="#bfe0f5" stroke="#3a6a98" stroke-width="1.5" stroke-linejoin="round"/><ellipse cx="14.5" cy="21.8" rx="3.2" ry="1.9" fill="#3a6a98"/><circle cx="14.8" cy="11.4" r="0.9" fill="#2a4a6a"/><circle cx="12.9" cy="13.9" r="0.95" fill="#2a4a6a"/><circle cx="16" cy="15" r="0.95" fill="#2a4a6a"/><circle cx="11.8" cy="17.3" r="0.95" fill="#2a4a6a"/><circle cx="16.5" cy="18" r="0.95" fill="#2a4a6a"/></svg><svg style="position:absolute;left:199.6px;top:717.5px;" width="3" height="3" viewBox="0 0 3 3"><circle cx="1.5" cy="1.5" r="1.1" fill="#9a9a9a"/></svg><svg style="position:absolute;left:274.4px;top:717.5px;" width="3" height="3" viewBox="0 0 3 3"><circle cx="1.5" cy="1.5" r="1.1" fill="#9a9a9a"/></svg><div style="position:absolute;left:423.4px;top:709.7px;width:25.19999999999999px;height:16.699999999999932px;background:#fbfbfb;border:1px solid #e9e9e9;border-radius:3px;box-sizing:border-box"></div><div style="position:absolute;left:452.2px;top:709.7px;width:25.19999999999999px;height:16.699999999999932px;background:#fbfbfb;border:1px solid #e9e9e9;border-radius:3px;box-sizing:border-box"></div><div style="position:absolute;left:481.0px;top:709.7px;width:25.19999999999999px;height:16.699999999999932px;background:#fbfbfb;border:1px solid #e9e9e9;border-radius:3px;box-sizing:border-box"></div><div style="position:absolute;left:509.79999999999995px;top:709.7px;width:25.200000000000045px;height:16.699999999999932px;background:#fbfbfb;border:1px solid #e9e9e9;border-radius:3px;box-sizing:border-box"></div><div style="position:absolute;left:538.6px;top:709.7px;width:25.200000000000045px;height:16.699999999999932px;background:#fbfbfb;border:1px solid #e9e9e9;border-radius:3px;box-sizing:border-box"></div><div style="position:absolute;left:567.4px;top:709.7px;width:25.200000000000045px;height:16.699999999999932px;background:#fbfbfb;border:1px solid #e9e9e9;border-radius:3px;box-sizing:border-box"></div><div style="position:absolute;left:596.2px;top:709.7px;width:25.200000000000045px;height:16.699999999999932px;background:#fbfbfb;border:1px solid #e9e9e9;border-radius:3px;box-sizing:border-box"></div><div style="position:absolute;left:625.0px;top:709.7px;width:25.200000000000045px;height:16.699999999999932px;background:#fbfbfb;border:1px solid #e9e9e9;border-radius:3px;box-sizing:border-box"></div><div style="position:absolute;left:653.8px;top:709.7px;width:25.200000000000045px;height:16.699999999999932px;background:#fbfbfb;border:1px solid #e9e9e9;border-radius:3px;box-sizing:border-box"></div><div style="position:absolute;left:682.5999999999999px;top:709.7px;width:25.200000000000045px;height:16.699999999999932px;background:#fbfbfb;border:1px solid #e9e9e9;border-radius:3px;box-sizing:border-box"></div><svg style="position:absolute;left:845px;top:690.9px;" width="13" height="14" viewBox="0 0 13 14"><path d="M3 6V4.3a3.5 3.5 0 0 1 7 0V6" fill="none" stroke="#8d8d8d" stroke-width="1.4"/><rect x="0.8" y="6.2" width="11.4" height="7" rx="1.2" fill="none" stroke="#8d8d8d" stroke-width="1.5"/></svg><svg style="position:absolute;left:865.5px;top:690.9px;" width="12" height="14" viewBox="0 0 12 14"><path d="M2.5 0.8h7M3.5 0.8l0.6 4.5L1 8.6h10L7.9 5.3L8.5 0.8M6 8.6v5" fill="none" stroke="#8d8d8d" stroke-width="1.4" stroke-linejoin="round"/></svg><svg style="position:absolute;left:884px;top:692.4px;" width="14" height="10" viewBox="0 0 14 10"><path d="M0.7 0v9.3H14M3.5 4.5v3.5M6.5 2.5v5.5M9.5 5v3M12.3 1.5v6.5" fill="none" stroke="#8d8d8d" stroke-width="1.4"/></svg><svg style="position:absolute;left:1236px;top:691.9px;" width="24" height="24" viewBox="0 0 24 24"><defs><clipPath id="lc4"><circle cx="12" cy="12" r="12"/></clipPath><filter id="lb4"><feGaussianBlur stdDeviation="0.5"/></filter></defs>
<g clip-path="url(#lc4)"><rect width="24" height="24" fill="#b8bcb8"/><g filter="url(#lb4)">
<path d="M3 19 Q6 15 10 16 H14 Q18 14 21 18 L20 21 H4Z" fill="#e070b8"/>
<path d="M11 5 L13 5 L13.5 9 L15 14 L13 17 L11 15 L10 10Z" fill="#203020"/><circle cx="12" cy="5" r="1.5" fill="#a03060"/>
<circle cx="6" cy="20.5" r="1.5" fill="#401020"/><circle cx="19" cy="20.5" r="1.5" fill="#401020"/></g></g></svg><svg style="position:absolute;left:1100px;top:25px;" width="60" height="110" viewBox="0 0 60 110"><path d="M16.3 6.6L19.2 50.8L39.6 43.8Z" fill="#f01010" stroke="#400" stroke-width="0.6"/><path d="M29.7 48.2L47.7 102.9" stroke="#222" stroke-width="1.3"/></svg>
<div style="position:absolute;left:108.00px;top:14.91px;line-height:0;white-space:pre;font-family:'Liberation Sans';font-size:15.838px;font-weight:700;color:#24679a;">Форумы</div><div style="position:absolute;left:223.60px;top:15.02px;line-height:0;white-space:pre;font-family:'Liberation Sans';font-size:15.804px;font-weight:400;color:#d3e8f8;">Что нового?</div><div style="position:absolute;left:361.00px;top:15.06px;line-height:0;white-space:pre;font-family:'Liberation Sans';font-size:15.699px;font-weight:400;color:#d3e8f8;">Медиа</div><div style="position:absolute;left:458.10px;top:15.10px;line-height:0;white-space:pre;font-family:'Liberation Sans';font-size:15.582px;font-weight:400;color:#d3e8f8;">Пользователи</div><div style="position:absolute;left:613.50px;top:14.70px;line-height:0;white-space:pre;font-family:'Liberation Sans';font-size:5.209px;font-weight:700;color:#ffffff;">SOS</div><div style="position:absolute;left:1023.00px;top:14.51px;line-height:0;white-space:pre;font-family:'Liberation Sans';font-size:16.415px;font-weight:400;color:#c7e2f7;">Vittoriay</div><div style="position:absolute;left:1217.70px;top:15.07px;line-height:0;white-space:pre;font-family:'Liberation Sans';font-size:16.239px;font-weight:400;color:#c2e2fa;">Поиск</div><div style="position:absolute;left:104.60px;top:58.77px;line-height:0;white-space:pre;font-family:'Liberation Sans';font-size:16.237px;font-weight:400;color:#6498c2;">В теме: (Пользователей: 7, Гостей: 2)</div><div style="position:absolute;left:104.30px;top:92.79px;line-height:0;white-space:pre;font-family:'Liberation Sans';font-size:12.735px;font-weight:400;color:#3a3a3a;"><span style="color:#8d8d8d">Vittoriay</span> , <span style="color:#3a7099">ОлегSinn</span> , <span style="color:#3a7099">Tatakov</span> , <span style="color:#3a7099">Nigillist</span> , <span style="color:#3a7099">Natacher</span></div><div style="position:absolute;left:104.30px;top:110.99px;line-height:0;white-space:pre;font-family:'Liberation Sans';font-size:11.872px;font-weight:400;color:#2a2a2a;">...и ещё 2.</div><div style="position:absolute;left:278.00px;top:224.86px;line-height:0;white-space:pre;font-family:'Liberation Sans';font-size:12.241px;font-weight:400;color:#e4a35c;">ОлегSinn:</div><div style="position:absolute;left:278.00px;top:254.61px;line-height:0;white-space:pre;font-family:'Liberation Sans';font-size:12.669px;font-weight:400;color:#3a3a3a;">Не совсем понял , где писать</div><div style="position:absolute;left:265.00px;top:289.07px;line-height:0;white-space:pre;font-family:'Liberation Sans';font-size:15.952px;font-weight:400;color:#363636;">Давай я тебе попробую видео записать , отправлю в личку</div><div style="position:absolute;left:1197.20px;top:345.90px;line-height:0;white-space:pre;font-family:'Liberation Sans';font-size:12.399px;font-weight:400;color:#ffffff;">Ответить</div><div style="position:absolute;left:104.70px;top:409.98px;line-height:0;white-space:pre;font-family:'Liberation Sans';font-size:16.799px;font-weight:400;color:#376a93;">Похожие темы</div><div style="position:absolute;left:154.00px;top:451.84px;line-height:0;white-space:pre;font-family:'Liberation Sans';font-size:16.612px;font-weight:700;color:#2f6896;"># 37-3 Весёлые гуси</div><div style="position:absolute;left:154.00px;top:471.81px;line-height:0;white-space:pre;font-family:'Liberation Sans';font-size:11.508px;font-weight:400;color:#939393;">Zaйcom</div><div style="position:absolute;left:207.00px;top:471.92px;line-height:0;white-space:pre;font-family:'Liberation Sans';font-size:11.196px;font-weight:400;color:#6e6e6e;">16 Янв 2022</div><div style="position:absolute;left:281.20px;top:471.71px;line-height:0;white-space:pre;font-family:'Liberation Sans';font-size:11.801px;font-weight:400;color:#939393;">37 взлетная полоса бросающих курить</div><div style="position:absolute;left:510.80px;top:472.48px;line-height:0;white-space:pre;font-family:'Liberation Sans';font-size:11.600px;font-weight:400;color:#a0a0a0;letter-spacing:-0.75px">135</div><div style="position:absolute;left:539.60px;top:472.48px;line-height:0;white-space:pre;font-family:'Liberation Sans';font-size:11.600px;font-weight:400;color:#a0a0a0;letter-spacing:-0.75px">136</div><div style="position:absolute;left:568.40px;top:472.48px;line-height:0;white-space:pre;font-family:'Liberation Sans';font-size:11.600px;font-weight:400;color:#a0a0a0;letter-spacing:-0.75px">137</div><div style="position:absolute;left:597.20px;top:472.48px;line-height:0;white-space:pre;font-family:'Liberation Sans';font-size:11.600px;font-weight:400;color:#a0a0a0;letter-spacing:-0.75px">138</div><div style="position:absolute;left:626.00px;top:472.48px;line-height:0;white-space:pre;font-family:'Liberation Sans';font-size:11.600px;font-weight:400;color:#a0a0a0;letter-spacing:-0.75px">139</div><div style="position:absolute;left:654.80px;top:472.48px;line-height:0;white-space:pre;font-family:'Liberation Sans';font-size:11.600px;font-weight:400;color:#a0a0a0;letter-spacing:-0.75px">140</div><div style="position:absolute;left:683.60px;top:472.48px;line-height:0;white-space:pre;font-family:'Liberation Sans';font-size:11.600px;font-weight:400;color:#a0a0a0;letter-spacing:-0.75px">141</div><div style="position:absolute;left:712.40px;top:472.48px;line-height:0;white-space:pre;font-family:'Liberation Sans';font-size:11.600px;font-weight:400;color:#a0a0a0;letter-spacing:-0.75px">142</div><div style="position:absolute;left:741.20px;top:472.48px;line-height:0;white-space:pre;font-family:'Liberation Sans';font-size:11.600px;font-weight:400;color:#a0a0a0;letter-spacing:-0.75px">143</div><div style="position:absolute;left:770.00px;top:472.48px;line-height:0;white-space:pre;font-family:'Liberation Sans';font-size:11.600px;font-weight:400;color:#a0a0a0;letter-spacing:-0.75px">144</div><div style="position:absolute;left:915.00px;top:451.27px;line-height:0;white-space:pre;font-family:'Liberation Sans';font-size:15.107px;font-weight:400;color:#939393;">Ответы:</div><div style="position:absolute;right:359.40px;top:451.20px;line-height:0;white-space:pre;font-family:'Liberation Sans';font-size:15.300px;font-weight:400;color:#222222;letter-spacing:-0.5px">3K</div><div style="position:absolute;left:915.00px;top:470.99px;line-height:0;white-space:pre;font-family:'Liberation Sans';font-size:11.863px;font-weight:400;color:#939393;">Просмотры:</div><div style="position:absolute;right:359.20px;top:470.84px;line-height:0;white-space:pre;font-family:'Liberation Sans';font-size:12.300px;font-weight:400;color:#939393;letter-spacing:-0.9px">25K</div><div style="position:absolute;right:170.00px;top:450.54px;line-height:0;white-space:pre;font-family:'Liberation Sans';font-size:15.467px;font-weight:400;color:#44769f;">8 мин. назад</div><div style="position:absolute;right:170.00px;top:470.66px;line-height:0;white-space:pre;font-family:'Liberation Sans';font-size:11.359px;font-weight:400;color:#939393;">Глагоша</div><div style="position:absolute;left:154.00px;top:513.89px;line-height:0;white-space:pre;font-family:'Liberation Sans';font-size:16.782px;font-weight:700;color:#2f6896;"># 37-2 Тигры с гантелями</div><div style="position:absolute;left:154.00px;top:533.41px;line-height:0;white-space:pre;font-family:'Liberation Sans';font-size:11.508px;font-weight:400;color:#939393;">Zaйcom</div><div style="position:absolute;left:207.00px;top:533.52px;line-height:0;white-space:pre;font-family:'Liberation Sans';font-size:11.196px;font-weight:400;color:#6e6e6e;">16 Янв 2022</div><div style="position:absolute;left:281.20px;top:533.31px;line-height:0;white-space:pre;font-family:'Liberation Sans';font-size:11.801px;font-weight:400;color:#939393;">37 взлетная полоса бросающих курить</div><div style="position:absolute;left:510.80px;top:534.08px;line-height:0;white-space:pre;font-family:'Liberation Sans';font-size:11.600px;font-weight:400;color:#a0a0a0;letter-spacing:-0.75px">319</div><div style="position:absolute;left:539.60px;top:534.08px;line-height:0;white-space:pre;font-family:'Liberation Sans';font-size:11.600px;font-weight:400;color:#a0a0a0;letter-spacing:-0.75px">320</div><div style="position:absolute;left:568.40px;top:534.08px;line-height:0;white-space:pre;font-family:'Liberation Sans';font-size:11.600px;font-weight:400;color:#a0a0a0;letter-spacing:-0.75px">321</div><div style="position:absolute;left:597.20px;top:534.08px;line-height:0;white-space:pre;font-family:'Liberation Sans';font-size:11.600px;font-weight:400;color:#a0a0a0;letter-spacing:-0.75px">322</div><div style="position:absolute;left:626.00px;top:534.08px;line-height:0;white-space:pre;font-family:'Liberation Sans';font-size:11.600px;font-weight:400;color:#a0a0a0;letter-spacing:-0.75px">323</div><div style="position:absolute;left:654.80px;top:534.08px;line-height:0;white-space:pre;font-family:'Liberation Sans';font-size:11.600px;font-weight:400;color:#a0a0a0;letter-spacing:-0.75px">324</div><div style="position:absolute;left:683.60px;top:534.08px;line-height:0;white-space:pre;font-family:'Liberation Sans';font-size:11.600px;font-weight:400;color:#a0a0a0;letter-spacing:-0.75px">325</div><div style="position:absolute;left:712.40px;top:534.08px;line-height:0;white-space:pre;font-family:'Liberation Sans';font-size:11.600px;font-weight:400;color:#a0a0a0;letter-spacing:-0.75px">326</div><div style="position:absolute;left:741.20px;top:534.08px;line-height:0;white-space:pre;font-family:'Liberation Sans';font-size:11.600px;font-weight:400;color:#a0a0a0;letter-spacing:-0.75px">327</div><div style="position:absolute;left:770.00px;top:534.08px;line-height:0;white-space:pre;font-family:'Liberation Sans';font-size:11.600px;font-weight:400;color:#a0a0a0;letter-spacing:-0.75px">328</div><div style="position:absolute;left:915.00px;top:512.87px;line-height:0;white-space:pre;font-family:'Liberation Sans';font-size:15.107px;font-weight:400;color:#939393;">Ответы:</div><div style="position:absolute;right:359.40px;top:512.80px;line-height:0;white-space:pre;font-family:'Liberation Sans';font-size:15.300px;font-weight:400;color:#222222;letter-spacing:-0.5px">7K</div><div style="position:absolute;left:915.00px;top:532.59px;line-height:0;white-space:pre;font-family:'Liberation Sans';font-size:11.863px;font-weight:400;color:#939393;">Просмотры:</div><div style="position:absolute;right:359.20px;top:532.44px;line-height:0;white-space:pre;font-family:'Liberation Sans';font-size:12.300px;font-weight:400;color:#939393;letter-spacing:-0.9px">33K</div><div style="position:absolute;right:170.00px;top:512.21px;line-height:0;white-space:pre;font-family:'Liberation Sans';font-size:15.265px;font-weight:400;color:#44769f;">1 минуту назад</div><div style="position:absolute;right:170.00px;top:532.10px;line-height:0;white-space:pre;font-family:'Liberation Sans';font-size:11.827px;font-weight:400;color:#939393;">griga</div><div style="position:absolute;left:154.00px;top:574.98px;line-height:0;white-space:pre;font-family:'Liberation Sans';font-size:16.796px;font-weight:700;color:#2f6896;">#37_1 Котики на взлётке</div><div style="position:absolute;left:154.00px;top:595.01px;line-height:0;white-space:pre;font-family:'Liberation Sans';font-size:11.508px;font-weight:400;color:#939393;">Zaйcom</div><div style="position:absolute;left:207.00px;top:595.12px;line-height:0;white-space:pre;font-family:'Liberation Sans';font-size:11.196px;font-weight:400;color:#6e6e6e;">16 Янв 2022</div><div style="position:absolute;left:281.20px;top:594.91px;line-height:0;white-space:pre;font-family:'Liberation Sans';font-size:11.801px;font-weight:400;color:#939393;">37 взлетная полоса бросающих курить</div><div style="position:absolute;left:510.80px;top:595.68px;line-height:0;white-space:pre;font-family:'Liberation Sans';font-size:11.600px;font-weight:400;color:#a0a0a0;letter-spacing:-0.75px">220</div><div style="position:absolute;left:539.60px;top:595.68px;line-height:0;white-space:pre;font-family:'Liberation Sans';font-size:11.600px;font-weight:400;color:#a0a0a0;letter-spacing:-0.75px">221</div><div style="position:absolute;left:568.40px;top:595.68px;line-height:0;white-space:pre;font-family:'Liberation Sans';font-size:11.600px;font-weight:400;color:#a0a0a0;letter-spacing:-0.75px">222</div><div style="position:absolute;left:597.20px;top:595.68px;line-height:0;white-space:pre;font-family:'Liberation Sans';font-size:11.600px;font-weight:400;color:#a0a0a0;letter-spacing:-0.75px">223</div><div style="position:absolute;left:626.00px;top:595.68px;line-height:0;white-space:pre;font-family:'Liberation Sans';font-size:11.600px;font-weight:400;color:#a0a0a0;letter-spacing:-0.75px">224</div><div style="position:absolute;left:654.80px;top:595.68px;line-height:0;white-space:pre;font-family:'Liberation Sans';font-size:11.600px;font-weight:400;color:#a0a0a0;letter-spacing:-0.75px">225</div><div style="position:absolute;left:683.60px;top:595.68px;line-height:0;white-space:pre;font-family:'Liberation Sans';font-size:11.600px;font-weight:400;color:#a0a0a0;letter-spacing:-0.75px">226</div><div style="position:absolute;left:712.40px;top:595.68px;line-height:0;white-space:pre;font-family:'Liberation Sans';font-size:11.600px;font-weight:400;color:#a0a0a0;letter-spacing:-0.75px">227</div><div style="position:absolute;left:741.20px;top:595.68px;line-height:0;white-space:pre;font-family:'Liberation Sans';font-size:11.600px;font-weight:400;color:#a0a0a0;letter-spacing:-0.75px">228</div><div style="position:absolute;left:770.00px;top:595.68px;line-height:0;white-space:pre;font-family:'Liberation Sans';font-size:11.600px;font-weight:400;color:#a0a0a0;letter-spacing:-0.75px">229</div><div style="position:absolute;left:915.00px;top:574.47px;line-height:0;white-space:pre;font-family:'Liberation Sans';font-size:15.107px;font-weight:400;color:#939393;">Ответы:</div><div style="position:absolute;right:359.40px;top:574.40px;line-height:0;white-space:pre;font-family:'Liberation Sans';font-size:15.300px;font-weight:400;color:#222222;letter-spacing:-0.5px">5K</div><div style="position:absolute;left:915.00px;top:594.19px;line-height:0;white-space:pre;font-family:'Liberation Sans';font-size:11.863px;font-weight:400;color:#939393;">Просмотры:</div><div style="position:absolute;right:359.20px;top:594.04px;line-height:0;white-space:pre;font-family:'Liberation Sans';font-size:12.300px;font-weight:400;color:#939393;letter-spacing:-0.9px">26K</div><div style="position:absolute;right:170.00px;top:573.68px;line-height:0;white-space:pre;font-family:'Liberation Sans';font-size:15.637px;font-weight:400;color:#44769f;">3 мин. назад</div><div style="position:absolute;right:170.00px;top:593.54px;line-height:0;white-space:pre;font-family:'Liberation Sans';font-size:12.299px;font-weight:400;color:#939393;">Дарьюшка</div><div style="position:absolute;left:159.50px;top:637.08px;line-height:0;white-space:pre;font-family:'Liberation Sans';font-size:13.036px;font-weight:400;color:#1d3a18;">36</div><div style="position:absolute;left:185.00px;top:636.21px;line-height:0;white-space:pre;font-family:'Liberation Sans';font-size:16.416px;font-weight:400;color:#2f6896;">#36_4 *Еноты в шапках*</div><div style="position:absolute;left:154.00px;top:656.61px;line-height:0;white-space:pre;font-family:'Liberation Sans';font-size:11.508px;font-weight:400;color:#939393;">Zaйcom</div><div style="position:absolute;left:207.00px;top:656.73px;line-height:0;white-space:pre;font-family:'Liberation Sans';font-size:11.168px;font-weight:400;color:#6e6e6e;">29 Ноя 2021</div><div style="position:absolute;left:281.20px;top:656.51px;line-height:0;white-space:pre;font-family:'Liberation Sans';font-size:11.806px;font-weight:400;color:#939393;">Прошедшие марафоны</div><div style="position:absolute;left:427.00px;top:657.28px;line-height:0;white-space:pre;font-family:'Liberation Sans';font-size:11.600px;font-weight:400;color:#a0a0a0;letter-spacing:-0.75px">352</div><div style="position:absolute;left:455.80px;top:657.28px;line-height:0;white-space:pre;font-family:'Liberation Sans';font-size:11.600px;font-weight:400;color:#a0a0a0;letter-spacing:-0.75px">353</div><div style="position:absolute;left:484.60px;top:657.28px;line-height:0;white-space:pre;font-family:'Liberation Sans';font-size:11.600px;font-weight:400;color:#a0a0a0;letter-spacing:-0.75px">354</div><div style="position:absolute;left:513.40px;top:657.28px;line-height:0;white-space:pre;font-family:'Liberation Sans';font-size:11.600px;font-weight:400;color:#a0a0a0;letter-spacing:-0.75px">355</div><div style="position:absolute;left:542.20px;top:657.28px;line-height:0;white-space:pre;font-family:'Liberation Sans';font-size:11.600px;font-weight:400;color:#a0a0a0;letter-spacing:-0.75px">356</div><div style="position:absolute;left:571.00px;top:657.28px;line-height:0;white-space:pre;font-family:'Liberation Sans';font-size:11.600px;font-weight:400;color:#a0a0a0;letter-spacing:-0.75px">357</div><div style="position:absolute;left:599.80px;top:657.28px;line-height:0;white-space:pre;font-family:'Liberation Sans';font-size:11.600px;font-weight:400;color:#a0a0a0;letter-spacing:-0.75px">358</div><div style="position:absolute;left:628.60px;top:657.28px;line-height:0;white-space:pre;font-family:'Liberation Sans';font-size:11.600px;font-weight:400;color:#a0a0a0;letter-spacing:-0.75px">359</div><div style="position:absolute;left:657.40px;top:657.28px;line-height:0;white-space:pre;font-family:'Liberation Sans';font-size:11.600px;font-weight:400;color:#a0a0a0;letter-spacing:-0.75px">360</div><div style="position:absolute;left:686.20px;top:657.28px;line-height:0;white-space:pre;font-family:'Liberation Sans';font-size:11.600px;font-weight:400;color:#a0a0a0;letter-spacing:-0.75px">361</div><div style="position:absolute;left:915.00px;top:636.07px;line-height:0;white-space:pre;font-family:'Liberation Sans';font-size:15.107px;font-weight:400;color:#939393;">Ответы:</div><div style="position:absolute;right:359.40px;top:636.00px;line-height:0;white-space:pre;font-family:'Liberation Sans';font-size:15.300px;font-weight:400;color:#222222;letter-spacing:-0.5px">7K</div><div style="position:absolute;left:915.00px;top:655.79px;line-height:0;white-space:pre;font-family:'Liberation Sans';font-size:11.863px;font-weight:400;color:#939393;">Просмотры:</div><div style="position:absolute;right:359.20px;top:655.64px;line-height:0;white-space:pre;font-family:'Liberation Sans';font-size:12.300px;font-weight:400;color:#939393;letter-spacing:-0.9px">63K</div><div style="position:absolute;right:170.00px;top:635.47px;line-height:0;white-space:pre;font-family:'Liberation Sans';font-size:15.092px;font-weight:400;color:#44769f;">17 Янв 2022</div><div style="position:absolute;right:170.00px;top:655.24px;line-height:0;white-space:pre;font-family:'Liberation Sans';font-size:11.994px;font-weight:400;color:#939393;">Toivo</div><div style="position:absolute;left:159.50px;top:698.68px;line-height:0;white-space:pre;font-family:'Liberation Sans';font-size:13.036px;font-weight:400;color:#1d3a18;">36</div><div style="position:absolute;left:185.00px;top:698.91px;line-height:0;white-space:pre;font-family:'Liberation Sans';font-size:16.717px;font-weight:700;color:#2f6896;">#36_3 Верхом на ёлке</div><div style="position:absolute;left:154.00px;top:718.21px;line-height:0;white-space:pre;font-family:'Liberation Sans';font-size:11.508px;font-weight:400;color:#939393;">Zaйcom</div><div style="position:absolute;left:207.00px;top:718.33px;line-height:0;white-space:pre;font-family:'Liberation Sans';font-size:11.168px;font-weight:400;color:#6e6e6e;">29 Ноя 2021</div><div style="position:absolute;left:281.20px;top:718.11px;line-height:0;white-space:pre;font-family:'Liberation Sans';font-size:11.806px;font-weight:400;color:#939393;">Прошедшие марафоны</div><div style="position:absolute;left:427.00px;top:718.88px;line-height:0;white-space:pre;font-family:'Liberation Sans';font-size:11.600px;font-weight:400;color:#a0a0a0;letter-spacing:-0.75px">444</div><div style="position:absolute;left:455.80px;top:718.88px;line-height:0;white-space:pre;font-family:'Liberation Sans';font-size:11.600px;font-weight:400;color:#a0a0a0;letter-spacing:-0.75px">445</div><div style="position:absolute;left:484.60px;top:718.88px;line-height:0;white-space:pre;font-family:'Liberation Sans';font-size:11.600px;font-weight:400;color:#a0a0a0;letter-spacing:-0.75px">446</div><div style="position:absolute;left:513.40px;top:718.88px;line-height:0;white-space:pre;font-family:'Liberation Sans';font-size:11.600px;font-weight:400;color:#a0a0a0;letter-spacing:-0.75px">447</div><div style="position:absolute;left:542.20px;top:718.88px;line-height:0;white-space:pre;font-family:'Liberation Sans';font-size:11.600px;font-weight:400;color:#a0a0a0;letter-spacing:-0.75px">448</div><div style="position:absolute;left:571.00px;top:718.88px;line-height:0;white-space:pre;font-family:'Liberation Sans';font-size:11.600px;font-weight:400;color:#a0a0a0;letter-spacing:-0.75px">449</div><div style="position:absolute;left:599.80px;top:718.88px;line-height:0;white-space:pre;font-family:'Liberation Sans';font-size:11.600px;font-weight:400;color:#a0a0a0;letter-spacing:-0.75px">450</div><div style="position:absolute;left:628.60px;top:718.88px;line-height:0;white-space:pre;font-family:'Liberation Sans';font-size:11.600px;font-weight:400;color:#a0a0a0;letter-spacing:-0.75px">451</div><div style="position:absolute;left:657.40px;top:718.88px;line-height:0;white-space:pre;font-family:'Liberation Sans';font-size:11.600px;font-weight:400;color:#a0a0a0;letter-spacing:-0.75px">452</div><div style="position:absolute;left:686.20px;top:718.88px;line-height:0;white-space:pre;font-family:'Liberation Sans';font-size:11.600px;font-weight:400;color:#a0a0a0;letter-spacing:-0.75px">453</div><div style="position:absolute;left:915.00px;top:697.67px;line-height:0;white-space:pre;font-family:'Liberation Sans';font-size:15.107px;font-weight:400;color:#939393;">Ответы:</div><div style="position:absolute;right:359.40px;top:697.60px;line-height:0;white-space:pre;font-family:'Liberation Sans';font-size:15.300px;font-weight:400;color:#222222;letter-spacing:-0.5px">9K</div><div style="position:absolute;left:915.00px;top:717.39px;line-height:0;white-space:pre;font-family:'Liberation Sans';font-size:11.863px;font-weight:400;color:#939393;">Просмотры:</div><div style="position:absolute;right:359.20px;top:717.24px;line-height:0;white-space:pre;font-family:'Liberation Sans';font-size:12.300px;font-weight:400;color:#939393;letter-spacing:-0.9px">86K</div><div style="position:absolute;right:170.00px;top:697.07px;line-height:0;white-space:pre;font-family:'Liberation Sans';font-size:15.092px;font-weight:400;color:#44769f;">17 Янв 2022</div><div style="position:absolute;right:170.00px;top:717.15px;line-height:0;white-space:pre;font-family:'Liberation Sans';font-size:11.117px;font-weight:400;color:#939393;">Паллада</div>
</body></html>
